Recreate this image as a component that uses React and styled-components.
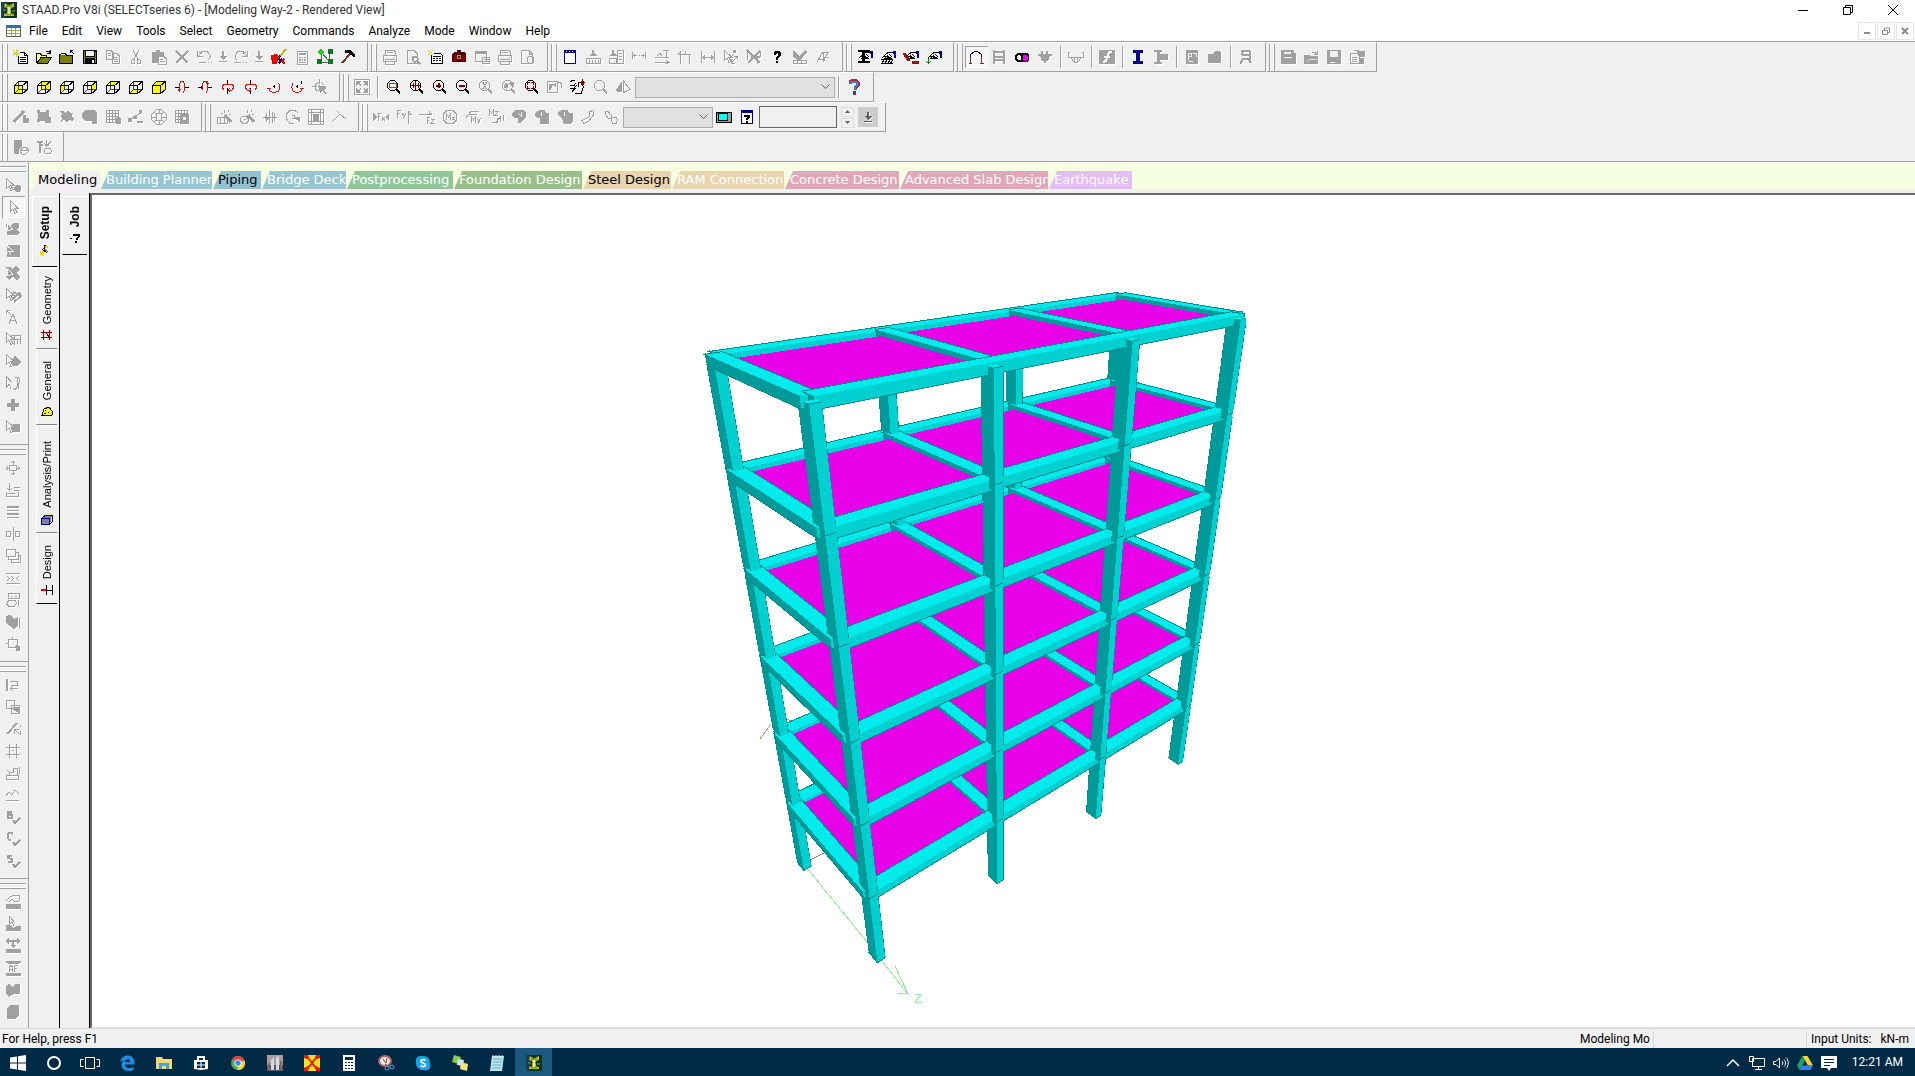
import styled, { createGlobalStyle } from 'styled-components'

const GlobalStyle = createGlobalStyle`
  * {
    box-sizing: border-box;
  }

  body {
    margin: 0;
    overflow: hidden;
    font-family: Roboto, 'Open Sans', sans-serif;
    font-size: 12px;
    color: #000;
  }

  button,
  input,
  select {
    font: inherit;
    color: inherit;
    padding: 0;
    margin: 0;
    border: 0;
    border-radius: 0;
    background: none;
  }
`

/* ---------- icons ---------- */

const GRAY = '#a0a0a0'
const NAVY = '#000080'
const MAROON = '#800000'

const S = (d, color = GRAY, width = 1) => <path d={d} fill="none" stroke={color} strokeWidth={width} />
const F = (d, color = GRAY) => <path d={d} fill={color} />

const CUBE_FACES = {
  front: 'M1 6H10V15H1z',
  back: 'M5 2H14V11H5z',
  left: 'M1 6L5 2V10L1 14z',
  right: 'M10 6L14 2V10L10 14z',
  top: 'M1 6L5 2H14L10 6z',
  bottom: 'M1 14L5 10H14L10 14z',
  solid: 'M1 6L5 2H14V10L9 14H1z',
}

const cube = (face) => (
  <>
    {F(CUBE_FACES[face], '#ff0')}
    {face !== 'solid' && S('M5.5 3V10.5H14M5 11L2 14', '#404040')}
    {S('M1.5 6.5H9.5V14.5H1.5zM1.5 6.5L5.5 2.5H14.5V10.5L9.5 14.5M9.5 6.5L14.5 2.5', '#000')}
  </>
)

const lens = (inner, color = '#000') => (
  <>
    {S('M6.5 1.5H9.5L12.5 4.5V8.5L9.5 11.5H5.5L2.5 8.5V4.5L5.5 1.5z', color)}
    {S('M11 10L15 14.5', color, 2)}
    {inner}
  </>
)

const hand = (extra) => (
  <>
    {S('M2 9L6 5L9 3H15M4 10L8 6M6 10L9 8L12 10M9 5L12 8', '#000')}
    {S('M3 7H9M5 9H11', '#000')}
    {F('M13 2H16V9H14V5H13z', NAVY)}
    {extra}
  </>
)

const spin = (ring, axis) => (
  <>
    {S(axis, '#000')}
    {S(ring, '#d01818')}
  </>
)

const check = (letter) => (
  <>
    {S(letter, GRAY, 2)}
    {S('M8 11L10 14L15 9', GRAY, 2)}
  </>
)

const CURSOR = 'M1.5 1.5V11.5L4 9L6 13.5L8 12.5L6 8.5H9z'

const ICONS = {
  newFile: (
    <>
      {F('M5 3H11L15 7V15H5z', '#fff')}
      {S('M5.5 7V14.5H14.5V6.5L11.5 3.5H7M11.5 3V6.5H15', '#000')}
      {S('M7 8.5H13M7 10.5H13M7 12.5H13', '#000')}
      {S('M0 1L6 7M6 1L0 7M3 0V8M0 4H7', '#d8d800')}
    </>
  ),
  open: (
    <>
      {F('M1 4H5L6 5H11V8H5L1 14z', '#ffff80')}
      {F('M1 14L5 8H16L12 14z', '#808000')}
      {S('M0.5 14V4.5H4L5.5 6H10.5V8M0.5 14.5H11.5L15.5 8.5H5L1 14M10 2.5H13L14.5 4M14.5 1V4.5H11', '#000')}
    </>
  ),
  close: (
    <>
      {F('M1 6H13V14H1z', '#808000')}
      {S('M0.5 14.5V6L2.5 4.5H6L7.5 6H13.5V14.5z', '#000')}
      {S('M11 1.5H14M11.5 1V4M11.5 1.5L15 5', NAVY)}
    </>
  ),
  save: (
    <>
      {F('M1 1H15V15H1z', '#000')}
      {F('M4 2H12V7H4z', '#f0f0f0')}
      {F('M2 2H3V14H2zM13 3H14V14H13zM3 8H13V9H3z', '#808000')}
      {F('M10 11H12V14H10z', '#fff')}
    </>
  ),
  copy: S('M1.5 1.5H6L8.5 4V10.5H1.5zM3 4.5H6M3 6.5H6M7.5 4.5H12L14.5 7V14.5H7.5zM9 8.5H12M9 10.5H13M9 12.5H13'),
  cut: S('M5 1L10 10M11 1L6 10M6 10.5H4.5L3.5 12V14.5H6L6.5 12zM10 10.5H11.5L12.5 12V14.5H10L9.5 12z'),
  paste: (
    <>
      {F('M1 3H5V1H9V3H13V7H7V14H1z')}
      {S('M7.5 7.5H13L15.5 10V15.5H7.5zM9 10.5H12M9 12.5H14')}
    </>
  ),
  remove: S('M2 2L14 14M14 2L2 14', GRAY, 2),
  undo: (
    <>
      {S('M3 4L6 2.5H11L14 6V9L12 11M1.5 2V7.5H7M2 7L6 3.5')}
      {S('M3 13.5H10M12 13.5H13M15 13.5H16')}
    </>
  ),
  redo: (
    <>
      {S('M13 4L10 2.5H5L2 6V9L4 11M14.5 2V7.5H9M14 7L10 3.5')}
      {S('M1 13.5H8M10 13.5H11M13 13.5H14')}
    </>
  ),
  dropArrow: (
    <>
      {F('M7 2H9V7H12L8 11L4 7H7z')}
      {F('M4 12H12V13H4z')}
    </>
  ),
  pen: (
    <>
      {F('M0 6L6 5L8 9L6 15H1z', '#e00')}
      {S('M15 0L9 7', '#c8b400', 2)}
      {S('M9 7L7 9', '#000', 2)}
      {S('M8 10L11 13M11 9.5L8 14.5', NAVY, 2)}
      {S('M13 10L11 12L14 15', '#e00', 2)}
    </>
  ),
  calc: (
    <>
      {S('M3.5 2.5H13.5V15.5H3.5z')}
      {F('M5 4H12V6H5zM5 8H7V9H5zM8 8H9V9H8zM10 8H12V9H10zM5 10H7V12H5zM8 10H9V12H8zM10 10H12V12H10zM5 13H12V14H5z')}
    </>
  ),
  nodes: (
    <>
      {S('M4 3L12 12M4 13H12V4M4 4V13', '#606060')}
      {F('M0 3L4 0L7 3L4 6z', '#2c2')}
      {F('M11 0H16V5H11zM0 10H5V15H0zM11 10H16V15H11z', '#0a7a1c')}
    </>
  ),
  hammer: (
    <>
      {S('M2 14L10 5', '#703020', 2)}
      {S('M5 2H9L12 5L15 7', '#000', 3)}
    </>
  ),
  print: S('M3.5 6V1.5H12L13.5 3V6M1.5 6.5H14.5V12.5H1.5zM3 10.5H13M3.5 13V15.5H12.5V13M5 3.5H11M12 8.5H13'),
  preview: (
    <>
      {S('M2.5 1.5H9L12.5 5V14.5H2.5z')}
      {S('M8.5 7.5H11.5L12.5 9V11L11 12.5H9L7.5 11V9zM12 12L15.5 15.5', GRAY, 2)}
    </>
  ),
  report: (
    <>
      {F('M3 4H15V15H3z', '#fff')}
      {S('M3.5 6V14.5H14.5V6.5L12.5 4.5H6', '#000')}
      {F('M5 7H13V8H5zM5 9H7V10H5zM8 9H10V10H8zM11 9H13V10H11zM5 11H7V12H5zM8 11H10V12H8zM11 11H13V12H11z', '#000')}
      {S('M0 1L5 6M5 1L0 6', '#d8d800')}
    </>
  ),
  camera: (
    <>
      {F('M1 5L3 3H6V1H10V3H13L15 5V13H1z', '#500000')}
      {F('M2 6H6V12H2zM11 6H14V12H11z', MAROON)}
      {S('M6.5 6.5H9.5V9.5H6.5z', '#c88')}
    </>
  ),
  copySheet: (
    <>
      {S('M1.5 2.5H12.5V12.5H1.5zM8 8.5H15.5V14.5H8zM10 10.5H15M10 12.5H15')}
      {F('M1 2H13V5H1z')}
    </>
  ),
  pagePreview: S('M1.5 1.5H9L12.5 5V14.5H1.5zM9 1V5H12.5M8.5 7.5H12L13.5 9V13L12 14.5H8.5L7.5 12V9z'),
  table: (
    <>
      {F('M2 1H14V15H2z', '#fff')}
      {S('M2.5 1.5H13.5V14.5H2.5z', NAVY)}
      {F('M2 1H14V4H2z', NAVY)}
      {F('M4 2H5V3H4zM7 2H8V3H7zM10 2H11V3H10z', '#fff')}
    </>
  ),
  ruler: (
    <>
      {F('M7 1H9V4L12 7H4L7 4z')}
      {S('M1.5 9.5H15.5V14.5H1.5zM4.5 11V14M7.5 11V14M10.5 11V14M13.5 11V14')}
    </>
  ),
  rulers: (
    <>
      {F('M4 1H6V4L9 7H1L4 4z')}
      {S('M1.5 9.5H8.5V14.5H1.5zM9.5 1.5H15.5V14.5H9.5zM11 4.5H14M11 7.5H14M11 10.5H14')}
    </>
  ),
  span: S('M1.5 3V10M14.5 3V10M1 6.5H6M10 6.5H15M3.5 5V8M12.5 5V8M8 6.5H9'),
  levelBeam: S('M3 7L6 4L8 7M1 8.5H8M9 1.5H15M12 1.5V8M9 8.5H15M1 13.5H14M12 11L15 13.5L12 15'),
  fence: S('M3.5 2V6M1 5.5H14M3.5 5V15M12.5 5V15M3.5 2L1.5 5M8 2V5'),
  width: (
    <>
      {S('M1.5 2V14M14.5 2V14M3 8.5H13')}
      {F('M2 8.5L5 6V11zM14 8.5L11 6V11z')}
    </>
  ),
  pickNode: (
    <>
      {S(CURSOR)}
      {F('M10 1H13V4H10z')}
      {S('M9 13L14 8M14.5 10V7.5H11M8.5 10V14.5H12M8 8L11 5')}
    </>
  ),
  pickMesh: (
    <>
      {S('M1 1L14 14M14 2L2 14M5 8H14', GRAY, 2)}
      {S('M1.5 1.5V11M14.5 2V8M11 9V15')}
    </>
  ),
  question: F('M5 3L6 2H10L12 4V6L9 9V11H7V8L9 6V4H8L7 6H5zM7 12H9V14H7z', '#000'),
  checkRuler: (
    <>
      {F('M1 2H3L7 7L13 1L15 3L8 12L1 8z')}
      {S('M1.5 11.5H14.5V14.5H1.5zM5.5 12V14M9.5 12V14')}
    </>
  ),
  textAngle: S('M2 13L8 3L9 13M4 10H9M8 3H14L10 8H14M10 8L9 12'),
  beamHand: hand(F('M1 1H13V3H8V12H13V14H1V12H5V3H1z', '#000')),
  hatchHand: hand(S('M1 15L5 10M4 15L8 10M7 15L11 10M10 15L13 11M1 14.5H13M1 10.5H13', '#000')),
  redHand: hand(
    <>
      {S('M1 4L6 12', '#a01010', 3)}
      {F('M9 12H16V15H9z', '#a01010')}
    </>
  ),
  dropHand: hand(S('M2.5 9V14M0 12L2.5 14.5L5 12', '#080')),
  portal: (
    <>
      {S('M2.5 14V5.5L5 3.5L7 2.5H9L11 3.5L13.5 5.5V14', NAVY)}
      {S('M0.5 14.5H4M12 14.5H15.5M2.5 8V14M13.5 8V14', '#703030')}
    </>
  ),
  ladder: S('M3 1V15M13 1V15M3 2.5H13M3 7.5H13M3 10.5H13', GRAY, 2),
  toggle: (
    <>
      {F('M3 4H13L15 6V11L13 13H3L1 11V6z', '#000')}
      {F('M4 6H6L7 8V10L6 11H4L3 10V7z', '#fff')}
      {F('M9 6H12L14 8V10L12 12H9z', '#e0e')}
    </>
  ),
  basket: F('M1 5H15V7H13L11 12H9V14H7V12H5L3 7H1zM4 2H6V5H4zM9 2H11V5H9z'),
  moment: S('M0.5 3V8H15.5V3M0 3.5H2M14 3.5H16M3 8L5 12L8 14L11 12L13 8M6.5 8V12M9.5 8V12'),
  func: (
    <>
      {F('M0 1H16V15H0z')}
      {S('M13 3H10L7 12L4 13M5 7.5H11', '#fff', 2)}
    </>
  ),
  iBeam: F('M3 1H13V4H10V12H13V15H3V12H6V4H3z', NAVY),
  iBeamSolid: F('M1 1H9V3H7V5H15V11H7V13H9V15H1V13H4V3H1z'),
  sheetP: (
    <>
      {F('M2 1H14V15H2z')}
      {S('M4.5 4V12M4 4.5H7V7.5H4M9 4.5H12V8M5 12.5H9', '#f0f0f0')}
    </>
  ),
  solid: F('M1 5H6L8 2H12L14 4V14H1z'),
  chair: S('M3 2H12M4 6H13M4 10H12M12 2V14M5 2L4 6M4 10L3 15M10 10L13 14', GRAY, 2),
  diskGray: (
    <>
      {F('M1 1H14V4H16V15H1z')}
      {F('M4 3H11V5H4zM4 8H12V9H4z', '#f0f0f0')}
    </>
  ),
  folderGray: (
    <>
      {F('M1 6H6L7 7H15V15H1z')}
      {S('M2 11L6 8H15M9 3.5H12L14 5M14.5 2V5.5H11')}
      {S('M4 13L7 10H14', '#e8e8e8')}
    </>
  ),
  diskOut: (
    <>
      {F('M1 1H15V15H1z')}
      {F('M4 2H12V8H4zM4 13H9V14H4z', '#f0f0f0')}
    </>
  ),
  props: (
    <>
      {S('M1.5 4.5H10V14.5H1.5zM3 8.5H8M3 10.5H8M3 12.5H8M5 2L9 1L14 5')}
      {F('M8 2H16V8H10zM11 9H15V15H11z')}
    </>
  ),
  rotXUp: spin('M5.5 11V4.5L7 2.5H9L10.5 4.5V11L9 13.5M4 10L5.5 12L7 10', 'M1 8.5H6M11 8.5H15'),
  rotXDown: spin('M5.5 11V4.5L7 2.5H9L10.5 4.5V11L9 13.5M9 5L10.5 3L12 5', 'M1 8.5H6M11 8.5H15M4 7V10'),
  rotYLeft: spin('M4 11L2.500 9V7L4 5.500H12L13.500 7V9L12 11H8M10 9L8 11L10 13', 'M7.5 1V6M7.5 9V15'),
  rotYRight: spin('M12 11L13.500 9V7L12 5.500H4L2.500 7V9L4 11H8M6 9L8 11L6 13', 'M7.5 1V6M7.5 9V15'),
  rotZLeft: spin('M12.500 4L14 8L12.500 12L8 14L4 12L2.500 9M1 9.500H5', 'M8 6V9M7 7.500H9'),
  rotZRight: spin('M4 4L2.500 8L4 12L8 14L12 12L13.500 9M11 9.500H15', 'M8 6V9M7 7.500H9M12 2V5'),
  orbit: (
    <>
      {S('M7.5 0V5M0 7.5H5M10 7.5H14M7 3L3.5 6V10L7 13M9 3L12 6')}
      {F('M6 6L15 9L12 11L15 15L13 15L10 12L8 14z')}
    </>
  ),
  fullScreen: (
    <>
      {S('M0.5 0.5H15.5V15.5H0.5z')}
      {F('M2 2H7V3L5 4L7 6L6 7L4 5L3 7H2zM14 2H9V3L11 4L9 6L10 7L12 5L13 7H14zM2 14H7V13L5 12L7 10L6 9L4 11L3 9H2zM14 14H9V13L11 12L9 10L10 9L12 11L13 9H14z')}
    </>
  ),
  zoomWindow: lens(S('M4 4.5H11V8.5H4z', '#a04040')),
  zoomExtent: lens(S('M7.5 2V11M3 6.5H12M5.5 4V9M10 4V9', MAROON)),
  zoomIn: lens(S('M7.5 4V9M5 6.5H10', MAROON, 2)),
  zoomOut: lens(S('M4.5 6.5H10.5', MAROON, 2)),
  zoomX: lens(S('M5 3.5H7M8 3.5H10M6 4L9.5 9.5M9.5 4L6 9.5M5 9.5H7M8 9.5H10'), GRAY),
  zoomPrev: lens(F('M4 9L5 4L8 5L10 3H14V8L9 5L7 10z'), GRAY),
  zoomAll: lens(S('M4.5 6V3.5H7M8 3.5H10.5V6M10.5 7V9.5H8M7 9.5H4.5V7', MAROON)),
  redraw: (
    <>
      {S('M1.5 2.5H11.5V13.5H1.5zM11 3.5H14L15.5 5V9')}
      {F('M3 11V5H8V6L6 7L5 11zM7 6L10 4V8z')}
    </>
  ),
  pan: (
    <>
      {S('M1 6.5H5L7 4M1 9.5H5L8 6M3 12.5L7 9M6 14.5H12L14 9V7M1 3L4 1H6M9 3V8', '#000')}
      {S('M13 0V7M10 3.5H16', MAROON)}
      {S('M12 2H14V5H12z', MAROON)}
    </>
  ),
  magnify: lens(null, GRAY),
  pyramid: (
    <>
      {F('M7 2V13H2L1 11z')}
      {S('M8.5 2V13.5L15 10.5z')}
    </>
  ),
  helpBlue: (
    <>
      {S('M4 5V3L6 1.5H10L12 4V6L9 9V11M7 14H10', '#c02040', 3)}
      {S('M4.5 5V3L6 2.5H9L11 4V6L8.5 8V11', '#38c', 2)}
      {F('M7 12H10V15H7z', '#224090')}
    </>
  ),
  memberAdd: (
    <>
      {S('M1 13L11 2', GRAY, 3)}
      {F('M10 6H13V9H16V14H10z')}
    </>
  ),
  plateAdd: F('M1 1H4V3H10V1H13V8H15V14H9V12H4V13H1V10H2V4H1z'),
  surface: F('M1 2H4L6 4L9 1L11 4H14L13 7L15 10L13 12L10 11L8 13L5 11L2 13L3 9L1 7L3 5z'),
  solidAdd: F('M4 1H13L15 4V15H10V12H3L0 9V4z'),
  gridEdit: (
    <>
      {S('M1.5 1.5H13.5V13.5H1.5zM4.5 1V13M7.5 1V13M10.5 1V13M1 4.5H13M1 7.5H13M1 10.5H13')}
      {F('M10 10L13 7L16 10V15H11z')}
    </>
  ),
  nodeLink: (
    <>
      {S('M2 10L13 4')}
      {F('M0 9H4V13H0zM5 7H9V10H5zM11 1H14V4H11zM9 12H15V14H9z')}
    </>
  ),
  globeMesh: S('M5.5 0.5H10.5L15.5 5.5V10.5L10.5 15.5H5.5L0.5 10.5V5.5zM5.5 4.5H10.5V11.5H5.5zM8 0V4M8 12V16M0 8H5M11 8H16M3 3L5 5M13 3L11 5M3 13L5 11M13 13L11 11'),
  gridBlock: (
    <>
      {S('M1.5 1.5H13.5V13.5H1.5zM4.5 1V13M7.5 1V13M10.5 1V13M1 4.5H13M1 7.5H13M1 10.5H13')}
      {F('M6 5H15V15H6z')}
      {F('M9 8H12V11H9z', '#f0f0f0')}
    </>
  ),
  wandTable: (
    <>
      {S('M1.5 8.5H11.5V14.5H1.5zM4.5 9V14M8 9V14')}
      {S('M9 6L15 13', GRAY, 3)}
      {S('M8 1V4M12 1V3M5 4H7M13 5H15')}
    </>
  ),
  wandCircle: (
    <>
      {S('M3.5 7.5H7L9.5 10V12L7 14.5H4L1.5 12V9.5zM5 10.5H7')}
      {S('M9 6L15 13', GRAY, 3)}
      {S('M8 1V4M12 1V3M13 5H15')}
    </>
  ),
  mirror: S('M1 8.5H15M7.5 1V15M4.5 4V12L7 8M12.5 4V12M10 3V14M3 10L5 5'),
  rotateC: (
    <>
      {S('M13 4L10 1.5H5L1.5 5V10L5 14.5H9')}
      {S('M6.5 6.5H9V9H6.5')}
      {F('M8 8H15V14L12 11z')}
    </>
  ),
  frameGrid: (
    <>
      {S('M0.5 0.5H15.5V15.5H0.5zM1 3.5H15M3.5 0V16M12.5 0V16M1 12.5H15')}
      {F('M5 5H11V13H5z')}
    </>
  ),
  corner: S('M1 13L9 5L15 10M6 2L8 4'),
  fx: (
    <>
      {F('M0 4L4 8L0 12zM16 4L12 8L16 12z')}
      {S('M5.5 4V12M5 4.5H8M5 7.5H7M9 8L12 12M12 8L9 12')}
    </>
  ),
  fy: S('M1.5 1V9M1 1.5H5M1 4.5H4M6 4L8 7M10 4L7 10M12.5 2V15M12.5 2L15 5H12'),
  fz: S('M0 5.5H13M10 2V5M13 5.5L10 3M8.5 8V15M8 8.5H11M8 11.5H10M12 10.5H15L12 14.5H15'),
  mx: S('M5 1.5H11L14.5 5V11L11 14.5H5L1.5 11V5zM4.5 11V5L6.5 8L8.5 5V11M10 8L12.5 11M12.5 8L10 11'),
  my: S('M1 9L6 2H14M3 5H12M6.5 14V8L8.5 11L10.5 8V14M12 9L13.5 12M15.5 9L13 15'),
  mz: S('M1.5 7V1L3.5 4L5.5 1V7M7 2.5H10L7 6.5H10M4 13.5H8L13 7M9.5 14V9M12.5 13V8M15.5 12V6'),
  blobA: (
    <>
      {F('M1 4L5 1H13L15 4V8L10 14H7V9H4L1 7z')}
      {S('M7 4L10 7V3', '#f0f0f0')}
    </>
  ),
  blobB: (
    <>
      {F('M2 3L6 1H11L12 4H15V15H6V9H3L1 6z')}
      {S('M7.5 3V7', '#f0f0f0')}
    </>
  ),
  blobC: (
    <>
      {F('M1 3L5 1H11L12 4H16V12L13 15H7L5 9L1 6z')}
      {S('M7.5 3V7', '#f0f0f0')}
    </>
  ),
  petals: S('M9 8L10 2.5L13 1.5L13.5 6L9 12M9 8L2 11.5L4 14.5L9 12'),
  twist: S('M2.5 2.5H5L8 6V9H5L2.5 5zM8 8L13 8.5L14.5 11L13 14.5H10L8 11z'),
  screen: (
    <>
      {F('M0 3H16V14H0z', '#000')}
      {F('M1 4H15V13H1z', GRAY)}
      {S('M2.5 4.5H11.5V11.5H2.5z', '#000')}
      {F('M3 5H11V11H3z', '#0ff')}
    </>
  ),
  helpSheet: (
    <>
      {F('M2 1H14V15H2z', '#fff')}
      {S('M2.5 1.5H13.5V14.5H2.5z', NAVY)}
      {F('M2 1H14V4H2z', NAVY)}
      {S('M6 8V6.5H9.5V8.5L8 10V11M7.5 12V14', '#000', 2)}
    </>
  ),
  stepDown: F('M7 3H9V7H12L8 11L4 7H7zM4 12H12V13H4z', '#606060'),
  dbPage: (
    <>
      {F('M1 1H9V7L6 10V15H1z')}
      {S('M8 10.5L10 8.5H13L15 10.5V13L13 15H9L7.5 13zM8 11.5H15')}
    </>
  ),
  dbCheck: (
    <>
      {S('M1 2.5H7M4 3V14M3 6H7', GRAY, 2)}
      {S('M10.5 1V7M8 4L10.5 7L13 4M9.5 9.5H14L15.5 12L14 14.5H9.5L8 12zM15 2L12 7')}
    </>
  ),
  pickSphere: (
    <>
      {S(CURSOR)}
      {F('M11 8H14L16 10V13L14 15H11L9 13V10z')}
    </>
  ),
  pointer: S('M5.5 1.5V12.5L8 10L10 14.5L12 13.5L10 9.5H13z'),
  pickPlate: (
    <>
      {F('M1 3L5 5L9 2H14V6L12 8L15 12L12 14H2V9z')}
      {S('M2 2V10L8 8z', '#f0f0f0')}
    </>
  ),
  pickFrame: (
    <>
      {F('M1 2H15V14H2z')}
      {S('M1.5 2V10L4 8L6 12M1.5 2L8 8H4', '#f0f0f0')}
    </>
  ),
  pickSurface: (
    <>
      {F('M1 2H5L7 4L11 1L15 4L12 8L15 12L12 15L8 12L4 15L1 12L3 8z')}
      {S('M2 3V11L8 9z', '#f0f0f0')}
    </>
  ),
  pickSolid: (
    <>
      {S(CURSOR)}
      {S('M8 5L14 8M7 13L14 6L16 9L9 15', GRAY, 2)}
    </>
  ),
  pickText: (
    <>
      {S('M1 1L6 6M1.5 5V1.5H5')}
      {S('M4 15L8 5L12 15M6 11.5H11')}
    </>
  ),
  pickRuler: (
    <>
      {S(CURSOR)}
      {S('M6 4.5H15.5V8.5H8M9.5 5V14M12.5 8V13M15.5 8V13')}
    </>
  ),
  pickCone: (
    <>
      {S(CURSOR)}
      {F('M10 2L16 9L13 13H8L6 9z')}
    </>
  ),
  pickLoad: S('M1.5 1.5V12.5L4 9L6 13.5M1.5 1.5L7 8M8 13.5L10 15L12 12V2M10 2.5H14M15 3L13 14'),
  plus: F('M6 2H10V6H14V10H10V14H6V10H2V6H6z'),
  pickBox: (
    <>
      {S(CURSOR)}
      {F('M8 5H15V13H9L7 10z')}
    </>
  ),
  rotateGizmo: S('M8 1V5M6 3L8 1L10 3M8 15V11M6 13L8 15L10 13M1 8H4M1 8L3 6M1 8L3 10M15 8H12M15 8L13 6M15 8L13 10M4.5 5.5H11.5V10.5H4.5z'),
  insertNode: S('M4.5 1V8M2 6L4.5 8.5L7 6M1 11.5V14.5H13V10M9 5.5H15M9 8.5H15M1 11.5H10'),
  align: F('M2 2H14V4H2zM2 6H14V7H2zM2 9H14V11H2zM2 13H14V14H2z'),
  splitBeam: S('M1.5 5.5H5.5V10.5H1.5zM10.5 5.5H14.5V10.5H10.5zM8 1V15'),
  stack: S('M1.5 1.5H10.5V8.5H1.5zM3.5 8V11.5H13V4.5H11M6.5 12V14.5H15.5V7.5H13'),
  merge: S('M1 3.5H15M1 13.5H15M2 6L4.5 8.5L2 11M6 6L8.5 8.5L6 11M14 6L11.5 8.5L14 11'),
  renumber: S('M3.5 1.5H14.5V6.5H3.5zM6 4H8M10 4H12M1 12L4 8.5H10L12 11L9 14.5H4L1.5 12M13 8V14'),
  extrude: (
    <>
      {F('M1 2L5 1L9 5L13 3V12L9 15L1 9z')}
      {S('M14.5 4V14')}
    </>
  ),
  transfer: (
    <>
      {S('M3.5 3.5H12.5V11.5H3.5zM1 7.5H4M7.5 1V4')}
      {F('M8 12L13 7V10H15V15H11V12z')}
    </>
  ),
  alignLeft: (
    <>
      {F('M1 2H3V14H1z')}
      {S('M5 4.5H12V8H6M7 8.5H14M7 11.5H13M8 9L6 11.5L8 14')}
    </>
  ),
  overlap: (
    <>
      {S('M1.5 1.5H9.5V9.5H1.5zM6.5 6.5H14.5V14.5H6.5z')}
      {F('M8 8H14V14L8 11z')}
    </>
  ),
  trim: (
    <>
      {S('M2 13L12 2', GRAY, 2)}
      {S('M9.5 13V8.5H14M10 9L14 13M15.5 4V6M15.5 10V14')}
    </>
  ),
  offsetGrid: S('M4.5 1V15M11.5 1V15M1 4.5H15M1 11.5H15M7 7H9'),
  profile: S('M1.5 10.5H13.5V14.5H1.5zM4.5 10V7H8V3.5H12V10M14.5 2V9M2 5L4 7'),
  plotLine: S('M1 9L4 5L7 8L10 3L14 7M1 13.5H14'),
  checkB: check('M2.5 2V9M2 2.5H6V5H2M2 8.5H6.5V5.5H3'),
  checkC: check('M8 3L6 1.5H4L2.5 3V7L4 8.5H6'),
  checkS: check('M7 2.5H3V5L7 6V8.5H2.5'),
  barHand: (
    <>
      {F('M1 10H16V15H1z')}
      {S('M1 7L5 3L8 1.5H14V7L10 8L7 5L4 8')}
    </>
  ),
  barPointer: (
    <>
      {S('M4.5 0.5V8L7 6L9 10')}
      {S('M4.5 0.5L10 7')}
      {F('M1 9H5L8 12L12 10H16V15H1z')}
    </>
  ),
  barSpan: F('M1 11H16V15H1zM0 3L4 0V2H12V0L16 3L12 6V4H4V6zM7 4H9V7H11L8 10L5 7H7z'),
  barAF: (
    <>
      {F('M1 1H16V3H13L15 4H2L4 3H1zM1 13H16V16H1z')}
      {S('M4.5 12V7L6 5.5L7.5 7V12M4 9.5H8M9.5 12V5.5H13M9 8.5H12')}
    </>
  ),
  blobD: F('M1 4L4 2L7 5L10 2H15V12H9L4 15L1 12z'),
  blobE: F('M5 1H14V11L10 15H2V4z'),
}

const Glyph = styled.svg`
  display: block;
  width: 16px;
  height: 16px;
  flex: none;
  overflow: visible;
  shape-rendering: crispEdges;
  filter: ${({ $raised }) => ($raised ? 'drop-shadow(1px 1px 0 #fff)' : 'none')};
`

const IconButton = styled.button`
  display: flex;
  align-items: center;
  justify-content: center;
  width: ${({ $width }) => $width || 23}px;
  height: 22px;
  flex: none;

  && {
    padding-right: 1px;
    background: ${({ $pressed }) => ($pressed ? '#f6f6f6' : 'transparent')};
  }

  box-shadow: ${({ $pressed }) => ($pressed ? 'inset 1px 1px 0 #a0a0a0, inset -1px -1px 0 #fff' : 'none')};
`

const ACTIVE = new Set(
  `newFile open close save pen nodes hammer report camera table question beamHand hatchHand redHand dropHand portal
  toggle iBeam front back left right top bottom solidCube rotXUp rotXDown rotYLeft rotYRight rotZLeft rotZRight
  zoomWindow zoomExtent zoomIn zoomOut zoomAll pan helpBlue screen helpSheet`.split(/\s+/)
)

const CUBES = { front: 'front', back: 'back', left: 'left', right: 'right', top: 'top', bottom: 'bottom', solidCube: 'solid' }
const NARROW = { undo: 20, redo: 18, dropArrow: 18 }

function Tool({ name, pressed, width }) {
  return (
    <IconButton type="button" aria-label={name} $pressed={pressed} $width={width || NARROW[name]}>
      <Glyph viewBox="0 0 16 16" $raised={!ACTIVE.has(name)}>
        {CUBES[name] ? cube(CUBES[name]) : ICONS[name]}
      </Glyph>
    </IconButton>
  )
}

/* ---------- window chrome ---------- */

const Window = styled.div`
  display: flex;
  flex-direction: column;
  height: 100vh;
  background: #f0f0f0;
`

const TitleBar = styled.header`
  display: flex;
  align-items: center;
  gap: 5px;
  height: 20px;
  flex: none;
  padding-left: 1px;
  background: #fff;
  color: #333;
`

const Title = styled.h1`
  margin: 0;
  flex: 1;
  font-size: 12px;
  font-weight: 400;
  line-height: 20px;
`

const AppIcon = styled.svg`
  width: 16px;
  height: 16px;
  flex: none;
`

const CaptionButtons = styled.div`
  display: flex;
`

const CaptionButton = styled.button`
  display: flex;
  align-items: center;
  justify-content: center;
  width: 45px;
  height: 18px;
`

const MenuBar = styled.nav`
  display: flex;
  align-items: center;
  height: 22px;
  flex: none;
  padding-left: 6px;
  background: #fff;
  border-bottom: 1px solid #a0a0a0;
`

const MenuList = styled.div`
  display: flex;
  gap: 14px;
  flex: 1;
  padding-left: 8px;
  line-height: 20px;
`

const ChildButton = styled.button`
  display: flex;
  align-items: center;
  justify-content: center;
  width: 18px;
  height: 18px;
  margin-right: 1px;

  && {
    border: 1px solid #e6e6e6;
  }
`

const MENUS = ['File', 'Edit', 'View', 'Tools', 'Select', 'Geometry', 'Commands', 'Analyze', 'Mode', 'Window', 'Help']

function StaadIcon() {
  return (
    <AppIcon viewBox="0 0 16 16">
      <rect width="16" height="16" fill="#12321c" />
      <path d="M0 0H4V16H0z" fill="#1c3c50" />
      <path d="M4 1L7 3H9L13 1V5L10 6V11L13 12V14H3V12L6 11V6L3 5z" fill="#b4c030" />
      <path d="M5 4H11M6 8H10M5 12H12" stroke="#4a7a20" />
      <path d="M7 5H9V12H7z" fill="#e8e8a0" />
      <path d="M11 8H14V10H11zM2 7H5V9H2z" fill="#3c7c28" />
    </AppIcon>
  )
}

function Chrome() {
  return (
    <>
      <TitleBar>
        <StaadIcon />
        <Title>STAAD.Pro V8i (SELECTseries 6) - [Modeling Way-2 - Rendered View]</Title>
        <CaptionButtons>
          <CaptionButton type="button" aria-label="Minimize">
            <svg width="10" height="10">{S('M0 5.5H10', '#000')}</svg>
          </CaptionButton>
          <CaptionButton type="button" aria-label="Restore">
            <svg width="10" height="10">{S('M.5 2.5H7.5V9.5H.5zM2.5 2V.5H9.5V7.5H8', '#000')}</svg>
          </CaptionButton>
          <CaptionButton type="button" aria-label="Close">
            <svg width="10" height="10">{S('M0 0L10 10M10 0L0 10', '#000')}</svg>
          </CaptionButton>
        </CaptionButtons>
      </TitleBar>
      <MenuBar>
        <svg width="15" height="12" shapeRendering="crispEdges">
          {F('M0 0H15V12H0z', '#fff')}
          {F('M0 0H15V3H0z', '#2878a0')}
          {S('M.5 .5H14.5V11.5H.5z', '#606060')}
          {S('M1 5.5H14M1 8.5H14M5.5 3V11M9.5 3V11', '#a8a060')}
        </svg>
        <MenuList>
          {MENUS.map((m) => (
            <button type="button" key={m}>
              {m}
            </button>
          ))}
        </MenuList>
        <ChildButton type="button" aria-label="Minimize view">
          <svg width="8" height="8">{F('M1 5H7V7H1z', '#868b94')}</svg>
        </ChildButton>
        <ChildButton type="button" aria-label="Restore view">
          <svg width="8" height="8">{S('M.5 3.5H5.5V7.5H.5zM2.5 3V1H7.5V5.5H6', '#868b94')}</svg>
        </ChildButton>
        <ChildButton type="button" aria-label="Close view">
          <svg width="8" height="8">{S('M1 1L7 7M7 1L1 7', '#868b94', 2)}</svg>
        </ChildButton>
      </MenuBar>
    </>
  )
}

/* ---------- toolbars ---------- */

const DockRow = styled.div`
  display: flex;
  height: 30px;
  flex: none;
  border-bottom: ${({ $last }) => ($last ? '1px solid #a0a0a0' : '0')};
`

const Bar = styled.div`
  display: flex;
  align-items: center;
  padding-right: 7px;
  border-right: 1px solid #a0a0a0;
  border-bottom: ${({ $last }) => ($last ? '0' : '1px solid #a0a0a0')};
  border-top: 1px solid #fff;
  margin-right: 1px;
`

const Grip = styled.div`
  width: 6px;
  height: 27px;
  margin: 0 2px;
  flex: none;
  border: solid #a0a0a0;
  border-width: 0 1px;
  background: linear-gradient(90deg, #fff 1px, #f0f0f0 1px 3px, #fff 3px);
`

const Separator = styled.span`
  width: 8px;
  height: 22px;
  flex: none;
  background: linear-gradient(90deg, transparent 3px, #a0a0a0 3px 4px, #fff 4px 5px, transparent 5px);
`

const ComboBox = styled.label`
  display: grid;
  align-items: center;
  width: ${({ $width }) => $width}px;
  height: 21px;
  flex: none;
  background: #e1e1e1;
  border: 1px solid #adadad;

  select,
  svg {
    grid-area: 1 / 1;
  }

  select {
    appearance: none;
    width: 100%;
    height: 100%;
  }

  svg {
    justify-self: end;
    margin-right: 4px;
  }
`

const ValueInput = styled.input`
  && {
    width: 78px;
    height: 22px;
    border: 1px solid #646464;
    background: #f0f0f0;
  }
`

const Spinner = styled.div`
  display: flex;
  flex-direction: column;
  gap: 1px;
  margin: 0 4px;

  button {
    display: flex;
    align-items: center;
    justify-content: center;
    width: 13px;
    height: 10px;
    border: 1px solid #dcdcdc;
  }
`

const ApplyButton = styled.div`
  display: flex;
  align-items: center;
  justify-content: center;
  width: 20px;
  height: 20px;
  background: #ccc;
`

function Combo({ label, width }) {
  return (
    <ComboBox $width={width}>
      <select aria-label={label} disabled>
        <option> </option>
      </select>
      <svg width="9" height="6">{S('M.5 .5L4.5 4.5L8.5 .5', '#606060')}</svg>
    </ComboBox>
  )
}

const names = (s) => s.trim().split(/\s+/)

// "|" is a separator, "*" in front of a name marks a pressed button
const ROWS = [
  [
    'newFile open close save copy cut paste remove undo dropArrow redo dropArrow pen calc nodes hammer',
    'print preview report camera copySheet print pagePreview',
    'table ruler rulers span levelBeam fence width pickNode pickMesh question checkRuler textAngle',
    'beamHand hatchHand redHand dropHand',
    '*portal ladder toggle basket | moment | func | iBeam iBeamSolid | sheetP solid | chair',
    'diskGray folderGray diskOut props',
  ],
  [
    'front back left right top bottom solidCube rotXUp rotXDown rotYLeft rotYRight rotZLeft rotZRight orbit',
    'fullScreen | zoomWindow zoomExtent zoomIn zoomOut zoomX zoomPrev zoomAll redraw pan magnify pyramid view-list | helpBlue',
  ],
  [
    'memberAdd plateAdd surface solidAdd gridEdit nodeLink globeMesh gridBlock',
    'wandTable wandCircle mirror rotateC frameGrid corner',
    'fx fy fz mx my mz blobA blobB blobC petals twist load-list screen helpSheet value',
  ],
  ['dbPage dbCheck'],
]

function BarItem({ item }) {
  if (item === '|') return <Separator />
  if (item === 'view-list') return <Combo label="View" width={200} />
  if (item === 'load-list') return <Combo label="Load case" width={90} />
  if (item === 'value') {
    return (
      <>
        <ValueInput aria-label="Value" />
        <Spinner>
          <button type="button" aria-label="Increase">
            <svg width="5" height="3">{F('M0 3L2.5 0L5 3z', '#606060')}</svg>
          </button>
          <button type="button" aria-label="Decrease">
            <svg width="5" height="3">{F('M0 0L2.5 3L5 0z', '#606060')}</svg>
          </button>
        </Spinner>
        <ApplyButton>
          <Tool name="stepDown" width={20} />
        </ApplyButton>
      </>
    )
  }
  return <Tool name={item.replace('*', '')} pressed={item.startsWith('*')} />
}

function Toolbars() {
  return ROWS.map((bars, r) => {
    const last = r === ROWS.length - 1
    return (
      <DockRow key={r} $last={last}>
        {bars.map((bar) => (
          <Bar key={bar} $last={last}>
            <Grip />
            {names(bar).map((item, i) => (
              <BarItem key={i} item={item} />
            ))}
          </Bar>
        ))}
      </DockRow>
    )
  })
}

/* ---------- left dock ---------- */

const SideDock = styled.aside`
  width: 29px;
  flex: none;
  overflow: hidden;
`

const SideBar = styled.div`
  display: flex;
  flex-direction: column;
  align-items: center;
  padding: 4px 2px 6px 0;
  border-right: 1px solid #a0a0a0;
  border-bottom: 1px solid #a0a0a0;
`

const SideGrip = styled.div`
  align-self: stretch;
  height: 6px;
  margin-bottom: 2px;
  border: solid #a0a0a0;
  border-width: 1px 0;
  background: linear-gradient(#fff 1px, #f0f0f0 1px 3px, #fff 3px);
`

const SIDE = [
  'pickSphere *pointer pickPlate pickFrame pickSurface pickSolid pickText pickRuler pickCone pickLoad plus pickBox',
  'rotateGizmo insertNode align splitBeam stack merge renumber extrude transfer',
  'alignLeft overlap trim offsetGrid profile plotLine checkB checkC checkS',
  'barHand barPointer barSpan barAF blobD blobE solid',
]

/* ---------- workspace ---------- */

const Main = styled.main`
  display: flex;
  flex: 1;
  min-height: 0;
`

const Workspace = styled.div`
  display: flex;
  flex-direction: column;
  flex: 1;
  min-width: 0;
`

const ModeTabs = styled.div`
  display: flex;
  align-items: flex-end;
  gap: 1px;
  height: 27px;
  flex: none;
  padding-left: 4px;
  background: #f6ffe2;
`

const ModeTab = styled.button`
  && {
    width: ${({ $width }) => $width}px;
    height: 18px;
    padding-left: 5px;
    background: ${({ $bg }) => $bg};
    color: ${({ $ink }) => $ink || '#fff'};
    clip-path: polygon(8px 0, 100% 0, 100% 100%, 0 100%);
    font: 13px/18px Verdana, 'DejaVu Sans', sans-serif;
    text-align: left;
    white-space: nowrap;
  }
`

const MODES = [
  ['Modeling', 67, '#f1eef1', '#000'],
  ['Building Planner', 111, '#97c5d0'],
  ['Piping', 48, '#93c1cf', '#000'],
  ['Bridge Deck', 84, '#97c5d0'],
  ['Postprocessing', 106, '#8fc79b'],
  ['Foundation Design', 128, '#9abf8b'],
  ['Steel Design', 88, '#e8d5b0', '#000'],
  ['RAM Connection', 112, '#e8d5b0'],
  ['Concrete Design', 114, '#e0a8b8'],
  ['Advanced Slab Design', 148, '#e0a8b8'],
  ['Earthquake', 83, '#e2bef5'],
]

const Body = styled.div`
  display: flex;
  flex: 1;
  min-height: 0;
  padding-top: 4px;
`

const PageColumn = styled.div`
  display: flex;
  flex-direction: column;
  align-items: flex-end;
  width: ${({ $width }) => $width}px;
  flex: none;
  padding: 3px 2px 0 0;
  border-right: 1px solid #000;
`

const PageTab = styled.button`
  && {
    display: flex;
    flex-direction: column;
    align-items: center;
    justify-content: flex-end;
    gap: 5px;
    width: ${({ $current }) => ($current ? 25 : 21)}px;
    height: ${({ $height }) => $height}px;
    padding-bottom: ${({ $current }) => ($current ? 10 : 7)}px;
    border-left: 1px solid #fff;
    border-bottom: 1px solid ${({ $current, $last }) => ($current || $last ? '#000' : '#808080')};
    border-top: 1px solid #fff;
    font: ${({ $current }) => ($current ? '700 12px' : '11px')} 'Liberation Sans', sans-serif;
  }

  span {
    writing-mode: vertical-rl;
    transform: rotate(180deg);
  }
`

const PAGES = [
  ['Setup', 71, <>{S('M5 1V7M5 1L9 3M3 5L8 9', '#000')}{F('M1 7H5V11H1zM6 2H9V4H6z', '#e8d800')}{S('M4 4L9 8', '#a03020')}</>],
  ['Geometry', 82, S('M0 3.5H11M0 8.5H11M2.5 1V11M5.5 4L8 8M8.5 1V11', MAROON)],
  ['General', 76, <>{F('M1 10V6L4 2H8L11 6V10z', '#ff0')}{S('M1 9.5L3 4L8 2L11 6V9.5M0 10.5H11M4 5H5M7 7H8M3 8H5', '#000')}</>],
  ['Analysis/Print', 108, <>{F('M1 5L4 2H11L9 11H1z', '#808090')}{S('M.5 5.5H8.5V11.5H.5zM1 5L4 2.5H11V9L9 11', NAVY)}{F('M8 0H11V2H8z', '#ff0')}</>],
  ['Design', 71, <>{S('M5.5 1V11M6 6H12', '#000')}{S('M12 1V11', '#000', 2)}{S('M0 6H5', '#d00', 2)}</>],
]

const JOB_ICON = <>{S('M5 4V2.5H9.5V5L7.5 7V8', '#000', 2)}{F('M6 9H8V11H6zM1 6H3V7H1z', '#000')}</>

const SmallGlyph = styled.svg`
  width: 12px;
  height: 12px;
  flex: none;
  shape-rendering: crispEdges;
`

function Page({ label, height, icon, current, last }) {
  return (
    <PageTab type="button" $height={height} $current={current} $last={last}>
      <span>{label}</span>
      <SmallGlyph viewBox="0 0 12 12">{icon}</SmallGlyph>
    </PageTab>
  )
}

const Viewport = styled.section`
  flex: 1;
  min-width: 0;
  background: #fff;
  border: solid #696969;
  border-width: 2px 0 0 2px;
  border-bottom: 1px solid #e3e3e3;

  svg {
    display: block;
    width: 100%;
    height: 100%;
  }
`

/* ---------- structure ---------- */

// camera matrix: world x runs along the frame, y is the storey, z points to the viewer
const CAM = [
  [199.8067, -51.6104, -25.5299, 804.3537],
  [14.2092, -102.6719, -16.2616, 864.3296],
  [0.0947979, -0.0513931, -0.1120943, 1],
]
const STOREYS = 6
const BASE = 0.012
const GRID_X = [0, 1, 2, 3]
const COL = { x: 0.029, z: 0.051 }
const BEAM = { x: 0.043, z: 0.048, y: 0.046 }
const FACE = { top: '#00ebeb', front: '#00d0d0', side: '#009a9a' }
const EDGE = '#008c8c'

function project([x, y, z]) {
  const [u, v, w] = CAM.map((row) => row[0] * x + row[1] * y + row[2] * z + row[3])
  return `${(u / w).toFixed(1)},${(v / w).toFixed(1)}`
}

const outline = (...corners) => corners.map(project).join(' ')

function Box({ x, y, z, capFrom, edged }) {
  const [x0, x1] = x
  const [y0, y1] = y
  const [z0, z1] = z
  const zc = capFrom ?? z0
  const faces = [
    [FACE.top, outline([x0, y1, z0], [x1, y1, z0], [x1, y1, z1], [x0, y1, z1])],
    [FACE.side, outline([x0, y0, zc], [x0, y1, zc], [x0, y1, z1], [x0, y0, z1])],
    [FACE.front, outline([x0, y0, z1], [x1, y0, z1], [x1, y1, z1], [x0, y1, z1])],
  ]
  return (
    <g>
      {edged && faces.map(([fill, points]) => <polygon key={fill} points={points} fill={EDGE} stroke={EDGE} strokeWidth="2" />)}
      {faces.map(([fill, points]) => (
        <polygon key={fill} points={points} fill={fill} />
      ))}
    </g>
  )
}

function Column({ x, z, y }) {
  const [left, right] = [x - COL.x, x + COL.x]
  const [back, front] = [z - COL.z, z + COL.z]
  const [y0, y1] = y
  return (
    <g fill="none" stroke={EDGE}>
      <polyline points={outline([left, y1, back], [left, y0, back])} />
      <polyline points={outline([right, y1, front], [right, y0, front])} />
      {y0 === BASE && <polyline points={outline([left, y0, back], [left, y0, front], [right, y0, front])} strokeWidth="2" />}
      <g stroke="none">
        <Box x={[left, right]} y={y} z={[back, front]} />
      </g>
    </g>
  )
}

function Columns({ storey }) {
  const y = [storey === 1 ? BASE : storey - 1 + BEAM.y, storey - BEAM.y]
  return [0, 1].map((z) => [...GRID_X].reverse().map((x) => <Column key={`${x}-${z}`} x={x} y={y} z={z} />))
}

function Joint({ x, z, level }) {
  const top = Math.min(level + BEAM.y, STOREYS)
  return (
    <>
      <Box x={[x - COL.x, x + COL.x]} y={[level - BEAM.y - 0.015, top]} z={z} />
      <polyline points={outline([x - COL.x, level, z[1]], [x + COL.x, level, z[1]])} stroke={EDGE} fill="none" />
    </>
  )
}

function Floor({ level }) {
  const y = [level - BEAM.y, level + BEAM.y]
  const far = [...GRID_X].reverse()
  return (
    <>
      {far.map((x) => (
        <Joint key={x} x={x} z={[-COL.z, COL.z]} level={level} />
      ))}
      <Box x={[0, 3]} y={y} z={[-BEAM.z, BEAM.z]} edged />
      {far.map((x) => (
        <g key={x}>
          {x < 3 && (
            <polygon
              points={outline([x, level, BEAM.z], [x + 1 - BEAM.x, level, BEAM.z], [x + 1 - BEAM.x, level, 1], [x, level, 1])}
              fill="#e800e8"
            />
          )}
          <Box x={[x - BEAM.x, x + BEAM.x]} y={y} z={[0, 1]} edged />
        </g>
      ))}
      <Box x={[0, 3]} y={y} z={[1 - BEAM.z, 1 + BEAM.z]} capFrom={1} edged />
      {far.map((x) => (
        <Joint key={x} x={x} z={[1, 1 + COL.z]} level={level} />
      ))}
    </>
  )
}

function FrameModel() {
  const levels = Array.from({ length: STOREYS }, (_, i) => i + 1)
  return (
    <svg viewBox="92 195 1823 832" shapeRendering="crispEdges">
      <path d="M760 739L771 724M785 718L793 722" stroke="#d88888" fill="none" />
      <path d="M810 860L824 853" stroke="#8080d0" fill="none" />
      <path d="M807 868L867 942L908 994M895 966L908 994L897 993" stroke="#90ee90" fill="none" />
      {levels.map((level) => (
        <g key={level}>
          <Columns storey={level} />
          <Floor level={level} />
        </g>
      ))}
      <text x="914" y="1003" fill="#90ee90" fontFamily="Liberation Sans, sans-serif" fontSize="13">
        Z
      </text>
    </svg>
  )
}

/* ---------- status bar and taskbar ---------- */

const StatusBar = styled.footer`
  display: flex;
  align-items: center;
  height: 20px;
  flex: none;
  padding: 2px 0 0 2px;
  border-top: 1px solid #d7d7d7;
  line-height: 17px;
  white-space: nowrap;
`

const StatusHelp = styled.span`
  flex: 1;
`

const StatusPane = styled.span`
  display: flex;
  gap: 9px;
  width: ${({ $width }) => $width}px;
  height: 17px;
  padding-left: ${({ $pad }) => $pad || 0}px;
  overflow: hidden;
  border-right: ${({ $line }) => ($line ? '1px solid #d7d7d7' : '0')};
`

const Taskbar = styled.div`
  display: flex;
  align-items: center;
  height: 28px;
  flex: none;
  padding-right: 12px;
  background: #002a46;
  color: #fff;
`

const TaskButton = styled.button`
  && {
    display: flex;
    align-items: center;
    justify-content: center;
    width: ${({ $width }) => $width || 37}px;
    height: 28px;
    padding-top: 2px;
    background: ${({ $active }) => ($active ? '#1b5a80' : 'transparent')};
  }
`

const Tray = styled.div`
  display: flex;
  align-items: center;
  margin-left: auto;
`

const TASKS = [
  ['Start', <path d="M0 2.5L7 1.5V7.5H0zM8 1.3L16 0V7.5H8zM0 8.5H7V14.5L0 13.5zM8 8.5H16V16L8 14.7z" fill="#fff" />],
  ['Cortana', <circle cx="8" cy="8" r="6" fill="none" stroke="#fff" strokeWidth="2" />],
  ['Task view', <path d="M3.5 2.5H12.5V13.5H3.5zM1.5 4.5H-1.5V11.5H1.5M14.5 4.5H17.5V11.5H14.5" fill="none" stroke="#fff" />],
  ['Edge', <path d="M1 7C2 2 6 .5 9 .5C13 .5 15.500 4 15.500 7V9.500H6C6 12 8 13 10 13C12 13 13.500 12.500 14.500 12V15C13 16 11 16 9.500 16C5 16 2.500 13 2.500 10C2.500 7 4.500 5.500 6 5C4 5 2 6 1 7zM6 7H11C11 5 10 4 8.500 4C7 4 6 5.500 6 7z" fill="#1e8be0" fillRule="evenodd" />],
  ['File Explorer', <><path d="M0 2H6L7 4H16V14H0z" fill="#f5d676" /><path d="M3 8H13V14H10V11H6V14H3z" fill="#3aa7dd" /></>],
  ['Store', <><path d="M1 5H15V14L8 15L1 14z" fill="#fff" /><path d="M5 5V2H11V5" fill="none" stroke="#fff" strokeWidth="2" /><path d="M4 7H7.500V9.500H4zM8.500 7H12V9.500H8.500zM4 10.500H7.500V13H4zM8.500 10.500H12V13H8.500z" fill="#002a46" /></>],
  ['Chrome', <><circle cx="8" cy="8" r="7" fill="#4caf50" /><path d="M8 8L2 4.400A7 7 0 0 1 14.500 5.500H8z" fill="#e2443a" /><path d="M8 8L14.600 5.500A7 7 0 0 1 7.500 15z" fill="#fbd03b" /><circle cx="8" cy="8" r="3.600" fill="#fff" /><circle cx="8" cy="8" r="2.700" fill="#4285f4" /></>],
  ['Towers', <><rect width="16" height="16" fill="#b09c9c" /><path d="M0 10H16V16H0z" fill="#5a5560" /><path d="M5 4L7 2V15H4V5zM9 2L12 1V15H9z" fill="#c8dcec" /><path d="M1 8H3V15H1zM13 6H15V15H13z" fill="#8c6858" /></>],
  ['Analyzer', <><rect width="16" height="16" fill="#e01818" /><path d="M4 0H12L10 5L16 3V13L10 10L12 16H4L6 10L0 13V3L6 5z" fill="#f5e41a" /><path d="M5 4L11 12M11 4L5 12" stroke="#e01818" strokeWidth="2" /></>],
  ['Calculator', <><path d="M2 0H14V16H2z" fill="#fff" /><path d="M4 2H12V5H4zM4 7H6V8H4zM7 7H9V8H7zM10 7H12V8H10zM4 10H6V11H4zM7 10H9V11H7zM10 10H12V11H10zM4 13H6V14H4zM7 13H9V14H7zM10 13H12V14H10z" fill="#002a46" /></>],
  ['Snipping Tool', <><ellipse cx="7" cy="6" rx="6" ry="5" fill="#f2e8e4" stroke="#b06860" strokeWidth="2" /><path d="M5 4L8 8L9 3M7 9L13 14" stroke="#804040" fill="none" /><circle cx="9" cy="13" r="2" fill="none" stroke="#58a0d8" /><circle cx="14" cy="12" r="2" fill="none" stroke="#58a0d8" /></>],
  ['Skype', <><path d="M5 1A4.500 4.500 0 0 0 1 7A7 7 0 0 0 9 15A4.500 4.500 0 0 0 15 9A7 7 0 0 0 7 1A4 4 0 0 0 5 1z" fill="#12a5e8" /><path d="M10.500 5.500C9 4 5.800 4.500 5.800 6.200C5.800 8.300 10.500 7.500 10.500 10C10.500 12 7 12 5.500 10.500" stroke="#fff" strokeWidth="1.600" fill="none" /></>],
  ['Sticky Notes', <><path d="M2 0L9 2L7 9L0 7z" fill="#8bc74c" /><path d="M6 4L12 5L11 11L5 10z" fill="#cfe7f4" /><path d="M9 7L16 9L15 16L8 14z" fill="#f3e27a" /></>],
  ['Notepad', <><path d="M3 1H15L13 16H1z" fill="#b8e4ec" /><path d="M4 4H13M4 7H13M3 10H12M3 13H12" stroke="#6cb0c0" /><path d="M4 0V2M7 0V2M10 0V2M13 0V2" stroke="#e8e8e8" /></>],
  ['STAAD.Pro', <StaadIcon />],
]

const TRAY = [
  ['Show hidden icons', <path d="M2 11L8 5L14 11" fill="none" stroke="#fff" strokeWidth="1.500" />],
  ['Network', <path d="M3.500 3.500H15.500V11.500H3.500zM9.500 12V15M6 14.500H13M.5 1.500H4.500V6.500H.5z" fill="none" stroke="#fff" />],
  ['Volume', <path d="M.5 6.500H3L6.500 3V13L3 9.500H.5zM9 6C10 7 10 9 9 10M11 4.500C13 6.500 13 9.500 11 11.500M13 2.500C16 5 16 11 13 13.500" fill="none" stroke="#fff" />],
  ['Drive', <><path d="M5.500 1H10.500L16 10.500H11z" fill="#fbd03b" /><path d="M5.500 1L8 5.500L2.500 15L0 10.500z" fill="#1ea362" /><path d="M5 10.500H16L13.500 15H2.500z" fill="#3c7ff0" /></>],
  ['Notifications', <><path d="M0 1H16V13H10L8 16L6 13H0z" fill="#fff" /><path d="M3 4.500H13M3 7.500H13M3 10.500H9" stroke="#002a46" /></>],
]

const TaskGlyph = styled.svg`
  width: 16px;
  height: 16px;
  overflow: visible;
`

const Clock = styled.time`
  padding-left: 11px;
`

export default function App() {
  return (
    <Window>
      <GlobalStyle />
      <Chrome />
      <Toolbars />
      <Main>
        <SideDock>
          {SIDE.map((bar) => (
            <SideBar key={bar}>
              <SideGrip />
              {names(bar).map((n) => (
                <Tool key={n} name={n.replace('*', '')} pressed={n.startsWith('*')} />
              ))}
            </SideBar>
          ))}
        </SideDock>
        <Workspace>
          <ModeTabs>
            {MODES.map(([label, width, bg, ink]) => (
              <ModeTab type="button" key={label} $width={width} $bg={bg} $ink={ink}>
                {label}
              </ModeTab>
            ))}
          </ModeTabs>
          <Body>
            <PageColumn $width={31}>
              {PAGES.map(([label, height, icon], i) => (
                <Page key={label} label={label} height={height} icon={icon} current={i === 0} last={i === PAGES.length - 1} />
              ))}
            </PageColumn>
            <PageColumn $width={30}>
              <Page label="Job" height={59} icon={JOB_ICON} current />
            </PageColumn>
            <Viewport>
              <FrameModel />
            </Viewport>
          </Body>
        </Workspace>
      </Main>
      <StatusBar>
        <StatusHelp>For Help, press F1</StatusHelp>
        <StatusPane $width={74} $line>
          Modeling Mo
        </StatusPane>
        <StatusPane $width={153} $line />
        <StatusPane $width={108} $pad={4}>
          <span>Input Units:</span>
          <span>kN-m</span>
        </StatusPane>
      </StatusBar>
      <Taskbar>
        {TASKS.map(([label, icon], i) => (
          <TaskButton key={label} type="button" aria-label={label} $width={i < 3 ? 36 : 37} $active={label === 'STAAD.Pro'}>
            <TaskGlyph viewBox="0 0 16 16">{icon}</TaskGlyph>
          </TaskButton>
        ))}
        <Tray>
          {TRAY.map(([label, icon]) => (
            <TaskButton key={label} type="button" aria-label={label} $width={24}>
              <TaskGlyph viewBox="0 0 16 16">{icon}</TaskGlyph>
            </TaskButton>
          ))}
          <Clock>12:21 AM</Clock>
        </Tray>
      </Taskbar>
    </Window>
  )
}
